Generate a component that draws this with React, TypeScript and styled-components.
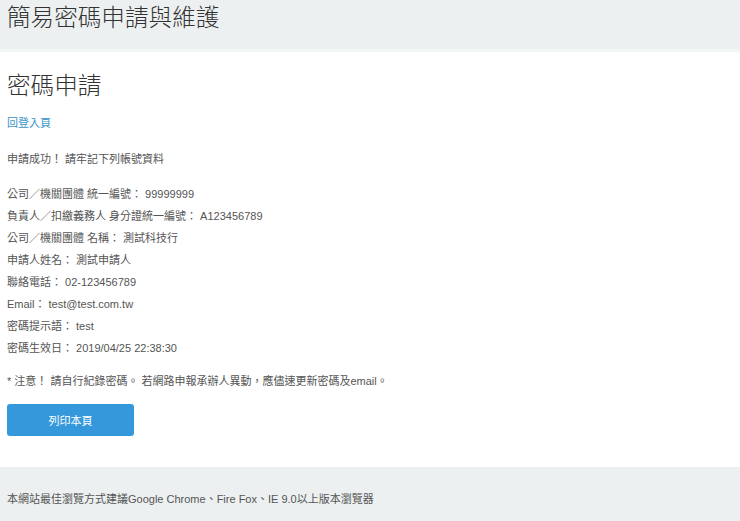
import React from 'react'
import styled, { createGlobalStyle } from 'styled-components'

const fontStack = `"Liberation Sans", Arial, "Noto Sans CJK TC", sans-serif`

const GlobalStyle = createGlobalStyle`
    body {
        margin: 0;
        background: #fff;
        font-family: ${fontStack};
        color: #555;
    }
`

const Header = styled.header`
    background: #ecf0f1;
    height: 49px;
    border-bottom: 3px solid #f3f5f6;
    padding: 0 7px;
`

const SiteTitle = styled.div`
    font-size: 23.6px;
    font-weight: 300;
    line-height: 36px;
    color: #333;
`

const Main = styled.main`
    padding: 0 7px;
`

const PageTitle = styled.h1`
    margin: 19px 0 0;
    font-size: 23.6px;
    font-weight: 300;
    line-height: 30px;
    color: #333;
`

const BackLink = styled.a`
    display: block;
    margin-top: 11px;
    font-size: 11px;
    line-height: 22px;
    color: #3a94c9;
    text-decoration: none;
`

const Line = styled.p<{ gap?: number }>`
    margin: ${(props) => props.gap ?? 0}px 0 0;
    font-size: 11px;
    line-height: 22px;
    color: #555;
`

const InfoList = styled.div`
    margin-top: 13px;
`

const PrintButton = styled.button`
    display: block;
    margin-top: 12px;
    width: 127px;
    height: 32px;
    border: none;
    border-radius: 3px;
    background: #3498db;
    color: #fff;
    font-family: ${fontStack};
    font-size: 11px;
    cursor: pointer;
`

const Footer = styled.footer`
    margin-top: 31px;
    background: #ecf0f1;
    padding: 21px 7px 20px;
    font-size: 11px;
    line-height: 22px;
    color: #555;
`

const info = [
    '公司／機關團體 統一編號： 99999999',
    '負責人／扣繳義務人 身分證統一編號： A123456789',
    '公司／機關團體 名稱： 測試科技行',
    '申請人姓名： 測試申請人',
    '聯絡電話： 02-123456789',
    'Email： test@test.com.tw',
    '密碼提示語： test',
    '密碼生效日： 2019/04/25 22:38:30',
]

export default function App() {
    return (
        <>
            <GlobalStyle />
            <Header>
                <SiteTitle>簡易密碼申請與維護</SiteTitle>
            </Header>
            <Main>
                <PageTitle>密碼申請</PageTitle>
                <BackLink href="#">回登入頁</BackLink>
                <Line gap={14}>申請成功！ 請牢記下列帳號資料</Line>
                <InfoList>
                    {info.map((text) => (
                        <Line key={text}>{text}</Line>
                    ))}
                </InfoList>
                <Line gap={11}>
                    * 注意！ 請自行紀錄密碼。 若網路申報承辦人異動，應儘速更新密碼及email。
                </Line>
                <PrintButton>列印本頁</PrintButton>
            </Main>
            <Footer>
                本網站最佳瀏覽方式建議Google Chrome、Fire Fox、IE 9.0以上版本瀏覽器
            </Footer>
        </>
    )
}
